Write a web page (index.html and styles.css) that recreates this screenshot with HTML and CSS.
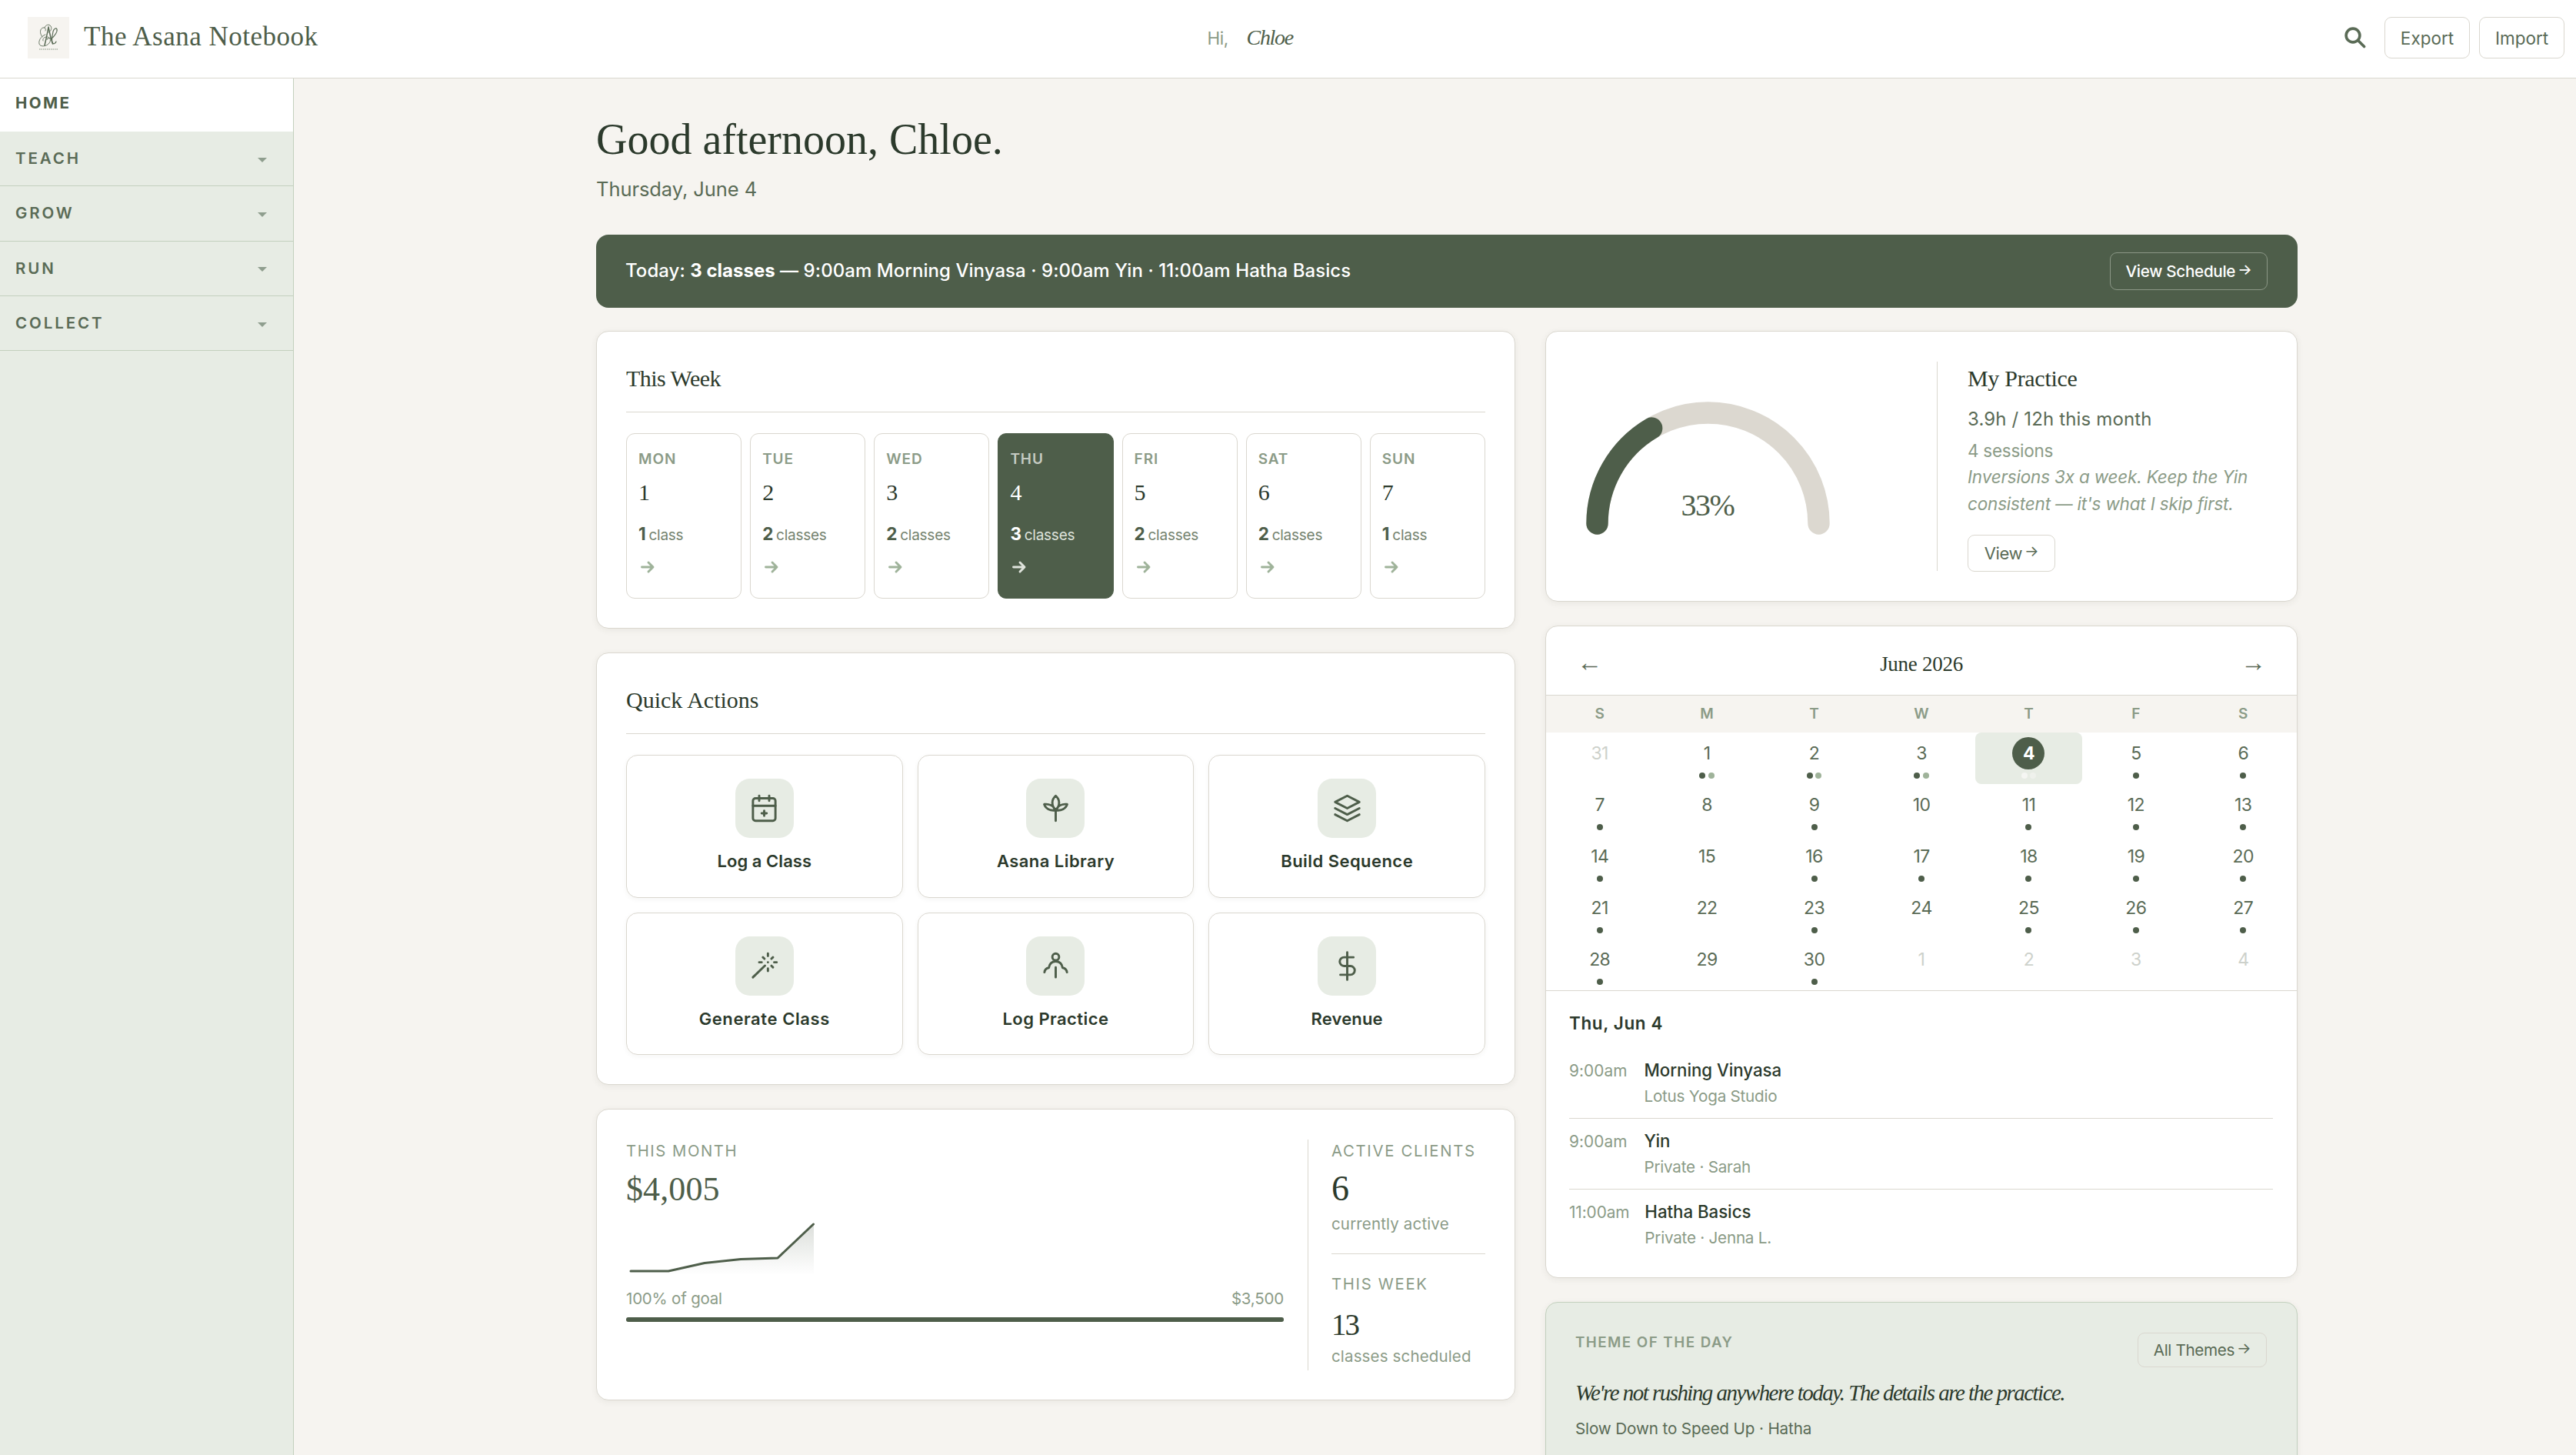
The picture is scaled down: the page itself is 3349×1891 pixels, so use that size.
FILE: index.html
```html
<!DOCTYPE html>
<html lang="en">
<head>
<meta charset="utf-8">
<title>The Asana Notebook</title>
<link rel="stylesheet" href="styles.css">
</head>
<body>
<header class="topbar">
  <div class="brand">
    <svg class="brand-logo" viewBox="0 0 54 54" fill="none" stroke="#5a6b56" stroke-linecap="round">
      <path stroke-width="1.500" d="M27 13c-1.500 9-3.500 17-5 24M27 13c1.500 8 3 15 5.500 22"/>
      <path stroke-width=".9" d="M19 26c-4-5-3-11 1-12 3-.6 4 2 3 4M23 23c-6 2-9 8-8 12 1 4 9 4 13-1 3-4 1-8-3-8-4 0-6 3-5 5M22 14c1-4 6-5 8-2 2 3 0 7-3 8"/>
      <path stroke-width="1.200" d="M31 28c4-3 8-9 7-12-1-2-4-1-5 3-1 5-2 12-1 14 1 3 4 2 5-1M25 29c2-2 5-2 6 0"/>
      <path stroke-width="1.400" stroke="#a9b1a4" stroke-linecap="butt" stroke-dasharray="1.500 1" d="M15 42h24"/>
    </svg>
    <span class="brand-name">The Asana Notebook</span>
  </div>
  <div class="greet"><span class="greet-hi">Hi,</span><span class="greet-name">Chloe</span></div>
  <div class="tools">
    <span class="search"><svg viewBox="0 0 28 28" width="28" height="28" fill="none" stroke="#5a6b56" stroke-width="3.600" stroke-linecap="round"><circle cx="11" cy="11" r="8.900"/><path d="M17.600 17.600l8 8"/></svg></span>
    <a class="btn top-btn">Export</a>
    <a class="btn top-btn">Import</a>
  </div>
</header>
<div class="shell">
  <nav class="side">
    <a class="side-item side-home">HOME</a>
    <a class="side-item">TEACH<i class="caret"></i></a>
    <a class="side-item">GROW<i class="caret"></i></a>
    <a class="side-item">RUN<i class="caret"></i></a>
    <a class="side-item">COLLECT<i class="caret"></i></a>
  </nav>
  <main class="main">
    <h1 class="hello">Good afternoon, Chloe.</h1>
    <p class="date">Thursday, June 4</p>
    <section class="banner">
      <p class="banner-text">Today: <b>3 classes</b> — 9:00am Morning Vinyasa · 9:00am Yin · 11:00am Hatha Basics</p>
      <a class="btn banner-btn">View Schedule<span class="arr">→</span></a>
    </section>
    <div class="columns">
      <div class="col">
        <section class="card">
          <h2 class="card-title title-week">This Week</h2>
          <div class="week">
            <div class="day"><span class="dow">MON</span><span class="num">1</span><span class="count"><b>1</b>class</span><svg class="go" viewBox="0 0 24 24"><path d="M4.500 12h13.500M13 6l6 6-6 6"/></svg></div>
            <div class="day"><span class="dow">TUE</span><span class="num">2</span><span class="count"><b>2</b>classes</span><svg class="go" viewBox="0 0 24 24"><path d="M4.500 12h13.500M13 6l6 6-6 6"/></svg></div>
            <div class="day"><span class="dow">WED</span><span class="num">3</span><span class="count"><b>2</b>classes</span><svg class="go" viewBox="0 0 24 24"><path d="M4.500 12h13.500M13 6l6 6-6 6"/></svg></div>
            <div class="day day-today"><span class="dow">THU</span><span class="num">4</span><span class="count"><b>3</b>classes</span><svg class="go" viewBox="0 0 24 24"><path d="M4.500 12h13.500M13 6l6 6-6 6"/></svg></div>
            <div class="day"><span class="dow">FRI</span><span class="num">5</span><span class="count"><b>2</b>classes</span><svg class="go" viewBox="0 0 24 24"><path d="M4.500 12h13.500M13 6l6 6-6 6"/></svg></div>
            <div class="day"><span class="dow">SAT</span><span class="num">6</span><span class="count"><b>2</b>classes</span><svg class="go" viewBox="0 0 24 24"><path d="M4.500 12h13.500M13 6l6 6-6 6"/></svg></div>
            <div class="day"><span class="dow">SUN</span><span class="num">7</span><span class="count"><b>1</b>class</span><svg class="go" viewBox="0 0 24 24"><path d="M4.500 12h13.500M13 6l6 6-6 6"/></svg></div>
          </div>
        </section>
        <section class="card">
          <h2 class="card-title">Quick Actions</h2>
          <div class="actions">
            <a class="action"><span class="tile"><svg class="ico" viewBox="0 0 24 24"><rect x="3" y="4" width="18" height="18" rx="2"/><path d="M16 2v4M8 2v4M3 10h18M12 14v4M10 16h4"/></svg></span>Log a Class</a>
            <a class="action"><span class="tile"><svg class="ico" viewBox="0 0 24 24"><path d="M12 13.500V22M12 13.500c-2-2-2.700-4-2.700-6C9.300 5.300 10.500 3.300 12 2c1.500 1.300 2.700 3.300 2.700 5.500 0 2-.7 4-2.700 6zM12 13.500c4.500.7 8-1.200 9.200-4.700C17.500 8.200 13.800 9.800 12 13.500zM12 13.500c-4.500.7-8-1.200-9.200-4.700 3.700-.6 7.400 1 9.200 4.700z"/></svg></span>Asana Library</a>
            <a class="action"><span class="tile"><svg class="ico" viewBox="0 0 24 24"><path d="M12 2L2.300 7 12 12l9.700-5zM2.300 12l9.700 5 9.700-5M2.300 17l9.700 5 9.700-5"/></svg></span>Build Sequence</a>
            <a class="action"><span class="tile"><svg class="ico" viewBox="0 0 24 24"><path d="M15 4V2M15 16v-2M8 9h2M20 9h2M17.800 11.800L19 13M15 9h.01M17.800 6.200L19 5M3 21l9.600-9.300M12.200 6.200L11 5"/></svg></span><span class="wide">Generate Class</span></a>
            <a class="action"><span class="tile"><svg class="ico" viewBox="0 0 24 24"><circle cx="12" cy="4.700" r="2.700"/><path d="M3 17c.3-2 1.500-3.300 3.500-3.600C7 10.300 9 8.300 12 8.300s5 2 5.500 5.100c2 .3 3.200 1.600 3.500 3.600M12 13v8"/></svg></span>Log Practice</a>
            <a class="action"><span class="tile"><svg class="ico" viewBox="0 0 24 24"><path d="M12 1v22M17 5H9.500a3.500 3.500 0 0 0 0 7h5a3.500 3.500 0 0 1 0 7H6.500"/></svg></span><span class="tight">Revenue</span></a>
          </div>
        </section>
        <section class="card month">
          <div class="income">
            <span class="label">THIS MONTH</span>
            <span class="money">$4,005</span>
            <svg class="spark" viewBox="0 0 260 74">
              <defs><linearGradient id="fade" x1="0" y1="0" x2="0" y2="1"><stop offset="0" stop-color="#4e5e4a" stop-opacity=".2"/><stop offset="1" stop-color="#4e5e4a" stop-opacity="0"/></linearGradient></defs>
              <path fill="url(#fade)" d="M5 66h50l47-10.500 47-5 48-1.500L244 4v67H5z"/>
              <path fill="none" stroke="#4e5e4a" stroke-width="3" stroke-linecap="round" stroke-linejoin="round" d="M6 66h49l47-10.500 47-5 48-1.500L243.500 5"/>
            </svg>
            <div class="goal"><span>100% of goal</span><span>$3,500</span></div>
            <div class="bar"><div class="bar-fill" style="width:100%"></div></div>
          </div>
          <div class="stats">
            <div class="stat">
              <span class="label">ACTIVE CLIENTS</span>
              <span class="big">6</span>
              <span class="sub">currently active</span>
            </div>
            <div class="stat stat-second">
              <span class="label">THIS WEEK</span>
              <span class="big big-pair">13</span>
              <span class="sub">classes scheduled</span>
            </div>
          </div>
        </section>
      </div>
      <div class="col">
        <section class="card practice">
          <svg class="gauge" viewBox="0 0 345 182" fill="none" stroke-width="28.400" stroke-linecap="round">
            <path stroke="#dcd8d0" d="M28.500 165.500a144 144 0 0 1 288 0"/>
            <path stroke="#4e5e4a" d="M28.500 165.500A144 144 0 0 1 99.200 41.600"/>
            <text class="gauge-text" x="172" y="155" text-anchor="middle">33%</text>
          </svg>
          <div class="practice-info">
            <h2 class="practice-title">My Practice</h2>
            <p class="hours">3.9h / 12h this month</p>
            <p class="sessions">4 sessions</p>
            <p class="note">Inversions 3x a week. Keep the Yin<br>consistent — it's what I skip first.</p>
            <a class="btn view-btn">View<span class="arr">→</span></a>
          </div>
        </section>
        <section class="card calendar">
          <div class="cal-head"><span class="cal-nav">←</span><span class="cal-title">June 2026</span><span class="cal-nav">→</span></div>
          <div class="cal-dows"><span>S</span><span>M</span><span>T</span><span>W</span><span>T</span><span>F</span><span>S</span></div>
          <div class="cal-grid">
            <div class="cell out"><b>31</b></div>
            <div class="cell"><b>1</b><i class="dots"><i></i><i class="light"></i></i></div>
            <div class="cell"><b>2</b><i class="dots"><i></i><i class="light"></i></i></div>
            <div class="cell"><b>3</b><i class="dots"><i></i><i class="light"></i></i></div>
            <div class="cell now"><b>4</b><i class="dots"><i></i><i class="light"></i></i></div>
            <div class="cell"><b>5</b><i class="dots"><i></i></i></div>
            <div class="cell"><b>6</b><i class="dots"><i></i></i></div>
            <div class="cell"><b>7</b><i class="dots"><i></i></i></div>
            <div class="cell"><b>8</b></div>
            <div class="cell"><b>9</b><i class="dots"><i></i></i></div>
            <div class="cell"><b>10</b></div>
            <div class="cell"><b>11</b><i class="dots"><i></i></i></div>
            <div class="cell"><b>12</b><i class="dots"><i></i></i></div>
            <div class="cell"><b>13</b><i class="dots"><i></i></i></div>
            <div class="cell"><b>14</b><i class="dots"><i></i></i></div>
            <div class="cell"><b>15</b></div>
            <div class="cell"><b>16</b><i class="dots"><i></i></i></div>
            <div class="cell"><b>17</b><i class="dots"><i></i></i></div>
            <div class="cell"><b>18</b><i class="dots"><i></i></i></div>
            <div class="cell"><b>19</b><i class="dots"><i></i></i></div>
            <div class="cell"><b>20</b><i class="dots"><i></i></i></div>
            <div class="cell"><b>21</b><i class="dots"><i></i></i></div>
            <div class="cell"><b>22</b></div>
            <div class="cell"><b>23</b><i class="dots"><i></i></i></div>
            <div class="cell"><b>24</b></div>
            <div class="cell"><b>25</b><i class="dots"><i></i></i></div>
            <div class="cell"><b>26</b><i class="dots"><i></i></i></div>
            <div class="cell"><b>27</b><i class="dots"><i></i></i></div>
            <div class="cell"><b>28</b><i class="dots"><i></i></i></div>
            <div class="cell"><b>29</b></div>
            <div class="cell"><b>30</b><i class="dots"><i></i></i></div>
            <div class="cell out"><b>1</b></div>
            <div class="cell out"><b>2</b></div>
            <div class="cell out"><b>3</b></div>
            <div class="cell out"><b>4</b></div>
          </div>
          <div class="agenda">
            <h3 class="agenda-date">Thu, Jun 4</h3>
            <div class="event"><span class="time">9:00am</span><div><p class="event-name">Morning Vinyasa</p><p class="event-sub">Lotus Yoga Studio</p></div></div>
            <div class="event"><span class="time">9:00am</span><div><p class="event-name">Yin</p><p class="event-sub">Private · Sarah</p></div></div>
            <div class="event"><span class="time">11:00am</span><div><p class="event-name">Hatha Basics</p><p class="event-sub">Private · Jenna L.</p></div></div>
          </div>
        </section>
        <section class="card theme">
          <div class="theme-head"><span class="theme-label">THEME OF THE DAY</span><a class="btn theme-btn">All Themes<span class="arr">→</span></a></div>
          <p class="quote">We're not rushing anywhere today. The details are the practice.</p>
          <p class="theme-sub">Slow Down to Speed Up · Hatha</p>
        </section>
      </div>
    </div>
  </main>
</div>
</body>
</html>
```
FILE: styles.css
```css
:root {
  --green: #4e5e4a;
  --ink: #2c3a2c;
  --mid: #5a6b56;
  --muted: #8b9b87;
  --sage: #e7ece4;
  --sage-line: #c3d0be;
  --line: #dad7cf;
  --paper: #f6f4f0;
  --serif: "Liberation Serif", serif;
  --sans: "Inter", sans-serif;
}
* { box-sizing: border-box; }
html, body { margin: 0; height: 1891px; overflow: hidden; }
body { display: flex; flex-direction: column; background: var(--paper); color: var(--mid); font-family: var(--sans); }
h1, h2, h3, p { margin: 0; font-weight: 400; }

.btn { display: flex; align-items: center; border: 1px solid var(--line); border-radius: 9px; white-space: nowrap; }
.arr { font-size: 19.500px; line-height: 20px; margin: 0 0 5px 3px; }

.topbar { flex: none; height: 102px; display: flex; justify-content: space-between; align-items: center; padding: 0 15px 3px 36px; background: #fff; border-bottom: 1px solid var(--line); }
.brand { display: flex; align-items: center; gap: 19px; }
.brand-logo { width: 54px; height: 54px; background: var(--paper); }
.brand-name { font: 35px/50px var(--serif); letter-spacing: .5px; color: var(--green); padding-bottom: 2px; width: 305px; white-space: nowrap; }
.greet { display: flex; align-items: center; width: 310px; }
.greet-hi { width: 51px; font-size: 22.500px; letter-spacing: -.5px; color: var(--muted); }
.greet-name { font: italic 28px/40px var(--serif); letter-spacing: -1.300px; color: var(--green); }
.tools { display: flex; align-items: center; gap: 12px; }
.search { width: 54px; height: 54px; display: grid; place-items: center; margin-right: -1px; }
.top-btn { width: 111px; height: 54px; justify-content: center; font-size: 22.500px; }

.shell { flex: 1; display: flex; min-height: 0; }
.side { flex: none; width: 382px; background: var(--sage); border-right: 1px solid var(--sage-line); }
.side-item { display: flex; align-items: center; justify-content: space-between; height: 71.330px; padding: 0 34px 1px 20px; border-bottom: 1px solid var(--sage-line); font-size: 20.500px; font-weight: 600; letter-spacing: 2.900px; color: var(--mid); }
.side-home { height: 69px; padding-bottom: 6px; background: #fff; border-bottom: 0; font-weight: 700; letter-spacing: 2.450px; color: var(--green); }
.caret { border: 6px solid transparent; border-top-color: #8f9e8e; border-bottom: 0; margin-top: 4px; }

.main { width: 2605px; padding: 49px 0 0 393px; }
.hello { font: 56px/60px var(--serif); color: var(--ink); }
.date { margin: 14.500px 0 39.500px; font-size: 25.500px; line-height: 40px; letter-spacing: -.07px; }
.banner { display: flex; align-items: center; justify-content: space-between; height: 95px; padding: 0 39px 0 38px; border-radius: 16px; background: var(--green); color: #fff; }
.banner-text { font-size: 24px; font-weight: 500; letter-spacing: .06px; padding-bottom: 2px; }
.banner-text b { font-weight: 700; letter-spacing: 0; }
.banner-btn { height: 49px; width: 205px; justify-content: center; border-color: #8b9786; font-size: 20.700px; font-weight: 500; letter-spacing: -.32px; }

.columns { display: grid; grid-template-columns: 1195px 978px; justify-content: space-between; align-items: start; margin-top: 30px; }
.col { display: grid; gap: 31px; }
.card { background: #fff; border: 1px solid var(--line); border-radius: 16px; padding: 41px 38px 38px; box-shadow: 0 2px 9px rgba(60, 60, 40, .07); }
.card-title { font: 30px/40px var(--serif); color: var(--ink); padding-bottom: 23px; margin-bottom: 27px; border-bottom: 1px solid var(--line); }
.title-week { letter-spacing: -.55px; }

.week { display: grid; grid-template-columns: repeat(7, 1fr); gap: 11px; }
.day { height: 215px; padding: 21px 15px 0; border: 1px solid var(--line); border-radius: 11px; display: flex; flex-direction: column; }
.dow { font-size: 19px; line-height: 24px; font-weight: 600; letter-spacing: .9px; color: var(--muted); }
.num { font: 30px/36px var(--serif); margin-top: 13px; color: var(--ink); }
.count { display: flex; align-items: baseline; gap: 4px; margin-top: 21px; font-size: 19px; line-height: 30px; letter-spacing: -.25px; color: #75836f; }
.count b { font-size: 22.500px; font-weight: 700; color: var(--green); }
.go { width: 24px; height: 24px; margin-top: 14px; fill: none; stroke: #9fb39a; stroke-width: 2.900; stroke-linecap: round; stroke-linejoin: round; }
.day-today { background: var(--green); border-color: var(--green); }
.day-today .dow { color: #c5cbc2; }
.day-today .num, .day-today b { color: #fff; }
.day-today .count { color: #dfe3dc; }
.day-today .go { stroke: #dfe3dc; }

.actions { display: grid; grid-template-columns: repeat(3, 1fr); gap: 19px; }
.action { height: 185.500px; padding-top: 30px; display: flex; flex-direction: column; align-items: center; gap: 15px; border: 1px solid var(--line); border-radius: 15px; box-shadow: 0 2px 6px rgba(60, 60, 40, .05); font-size: 22px; line-height: 30px; font-weight: 600; letter-spacing: .45px; color: var(--ink); }
.action:first-child { letter-spacing: .05px; }
.wide { letter-spacing: .59px; }
.tight { letter-spacing: .15px; }
.tile { width: 76px; height: 77px; display: grid; place-items: center; border-radius: 19px; background: var(--sage); }
.ico { width: 39px; height: 39px; fill: none; stroke: var(--green); stroke-width: 1.800; stroke-linecap: round; stroke-linejoin: round; }

.month { display: flex; height: 378.500px; padding-top: 39px; }
.income { flex: 1; display: flex; flex-direction: column; margin-right: 31px; padding-top: 1px; }
.label { font-size: 20.300px; line-height: 28px; letter-spacing: 1.550px; color: var(--muted); white-space: nowrap; }
.stats .label { letter-spacing: 1.700px; }
.money { font: 44px/50px var(--serif); letter-spacing: .1px; margin-top: 11px; color: var(--green); }
.spark { width: 260px; height: 74px; margin-top: 15px; }
.goal { display: flex; justify-content: space-between; margin-top: 14px; font-size: 20.500px; line-height: 28px; letter-spacing: -.2px; color: var(--muted); }
.bar { margin-top: 10px; height: 6px; border-radius: 3px; background: var(--line); }
.bar-fill { height: 6px; border-radius: 3px; background: var(--green); }
.stats { width: 231px; padding: 1px 0 0 30px; border-left: 1px solid var(--line); }
.stat { display: flex; flex-direction: column; }
.stat-second { margin-top: 24px; padding-top: 25px; border-top: 1px solid var(--line); }
.big { font: 46px/50px var(--serif); margin: 10px 0 7px; color: var(--ink); }
.big-pair { font-size: 39px; line-height: 50px; letter-spacing: -2px; margin: 14px 0 2px; }
.sub { font-size: 20.500px; line-height: 28px; letter-spacing: .15px; color: var(--muted); white-space: nowrap; }

.practice { display: flex; align-items: center; height: 352px; padding: 39px 38px; }
.gauge { flex: none; width: 345px; height: 182px; }
.gauge-text { font: 40px var(--serif); letter-spacing: -1.500px; fill: var(--green); stroke: none; }
.practice-info { align-self: stretch; flex: 1; margin-left: 125px; padding: 2px 0 0 39px; border-left: 1px solid var(--line); color: var(--muted); }
.practice-title { font: 30px/40px var(--serif); letter-spacing: -.3px; color: var(--ink); }
.hours { margin-top: 17px; font-size: 24px; line-height: 32px; letter-spacing: .15px; color: var(--mid); }
.sessions { margin-top: 9px; font-size: 22.500px; line-height: 32px; letter-spacing: -.25px; }
.note { font-size: 22.500px; line-height: 35px; font-style: italic; letter-spacing: -.18px; white-space: nowrap; }
.view-btn { margin-top: 23px; width: 114px; height: 47.500px; justify-content: center; font-size: 22px; letter-spacing: -.4px; color: var(--mid); }

.calendar { padding: 0; overflow: hidden; }
.cal-head { display: flex; align-items: center; justify-content: space-between; height: 90px; padding: 9px 40px 0; border-bottom: 1px solid var(--line); }
.cal-title { font: 27px/40px var(--serif); letter-spacing: -.28px; color: var(--ink); }
.cal-nav { font: 33px/40px var(--serif); padding-bottom: 5px; color: var(--mid); }
.cal-dows { display: grid; grid-template-columns: repeat(7, 1fr); height: 48px; padding-bottom: 2px; align-items: center; text-align: center; background: var(--paper); font-size: 19px; font-weight: 600; color: var(--muted); }
.cal-grid { display: grid; grid-template-columns: repeat(7, 1fr); }
.cell { height: 67.100px; padding-top: 6px; display: flex; flex-direction: column; align-items: center; gap: 4px; }
.cell b { width: 42px; height: 42px; border-radius: 50%; line-height: 42px; text-align: center; font-size: 23px; font-weight: 400; letter-spacing: -.6px; }
.out b { color: #cdd1cb; }
.dots { display: flex; gap: 3.500px; }
.dots i { width: 8px; height: 8px; border-radius: 50%; background: var(--green); }
.dots .light { background: #9fb39a; }
.now { background: var(--sage); border-radius: 8px; }
.now b { background: var(--green); color: #fff; font-weight: 700; }
.now .dots i { background: #f5f6f3; }
.now .dots .light { background: #eff1ec; }
.agenda { padding: 26.500px 31px 22.500px 30px; border-top: 1px solid var(--line); }
.agenda-date { font-size: 22.500px; line-height: 30px; font-weight: 600; letter-spacing: .6px; color: var(--ink); margin-bottom: 17px; }
.event { display: flex; gap: 20px; height: 92px; padding-top: 14px; border-bottom: 1px solid var(--line); }
.event:last-child { border-bottom: 0; }
.time { min-width: 77.500px; font-size: 20.800px; line-height: 32px; letter-spacing: .1px; color: var(--muted); }
.event:last-child .time { letter-spacing: -.1px; }
.event-name { font-size: 22.300px; line-height: 30px; font-weight: 500; letter-spacing: -.05px; color: var(--ink); }
.event-sub { margin-top: 5px; font-size: 20.700px; line-height: 28px; letter-spacing: -.25px; color: var(--muted); }

.theme { background: var(--sage); border-color: var(--sage-line); padding: 39px 39px 38px 38px; }
.theme-head { display: flex; justify-content: space-between; align-items: flex-start; }
.theme-label { font-size: 18.800px; line-height: 26px; font-weight: 600; letter-spacing: 1.440px; color: var(--muted); }
.theme-btn { height: 45px; width: 168px; justify-content: center; font-size: 20.700px; letter-spacing: -.36px; }
.quote { margin-top: 13px; font: italic 29px/40px var(--serif); letter-spacing: -1.530px; color: var(--ink); white-space: nowrap; }
.theme-sub { margin-top: 13px; font-size: 20.700px; line-height: 28px; letter-spacing: -.15px; }
```
